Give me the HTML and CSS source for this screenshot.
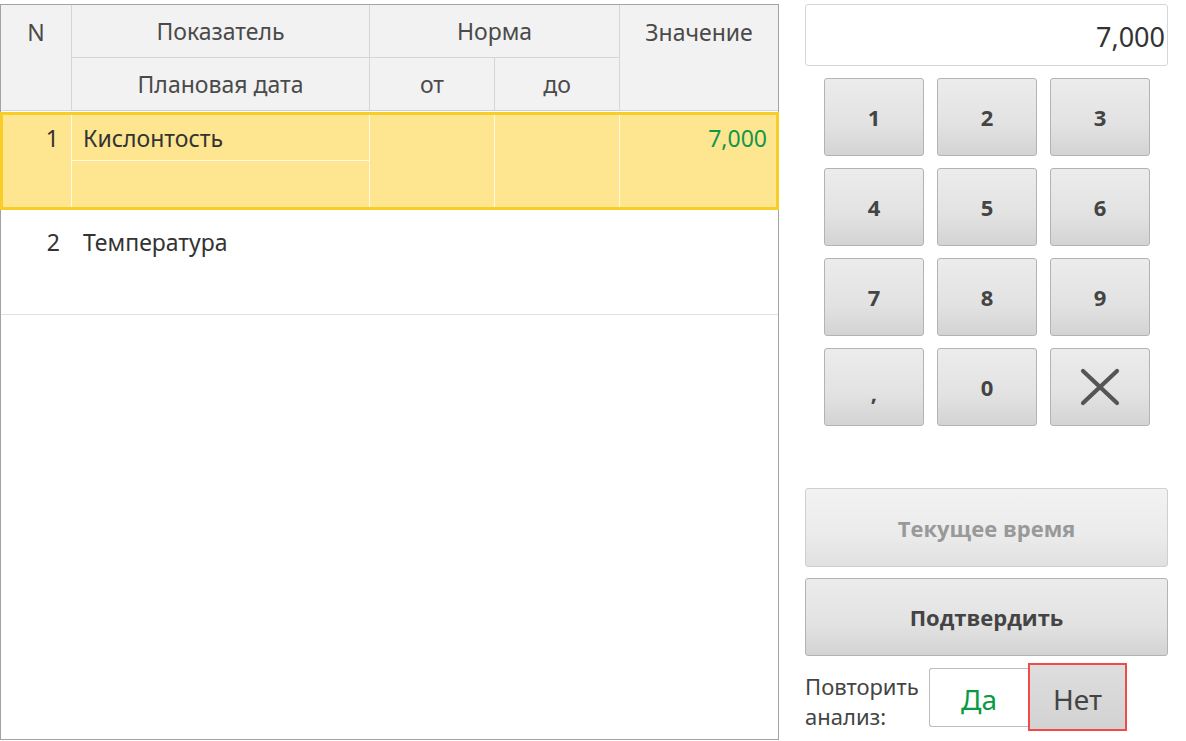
FILE: index.html
```html
<!DOCTYPE html>
<html lang="ru">
<head>
<meta charset="utf-8">
<title>Ввод показателей</title>
<link rel="stylesheet" href="styles.css">
</head>
<body>
<div class="page">
  <div class="grid-panel">
    <div class="thead">
      <div class="hc hc-n">N</div>
      <div class="hc hc-name">Показатель</div>
      <div class="hc hc-norm">Норма</div>
      <div class="hc hc-val">Значение</div>
      <div class="hc hc-date">Плановая дата</div>
      <div class="hc hc-from">от</div>
      <div class="hc hc-to">до</div>
    </div>
    <div class="row row-selected">
      <div class="c c-n">1</div>
      <div class="c c-name">
        <div class="sub sub-top">Кислонтость</div>
        <div class="sub sub-bottom"></div>
      </div>
      <div class="c c-from"></div>
      <div class="c c-to"></div>
      <div class="c c-val">7,000</div>
    </div>
    <div class="row row-plain">
      <div class="c c-n">2</div>
      <div class="c c-name">
        <div class="sub sub-top">Температура</div>
        <div class="sub sub-bottom"></div>
      </div>
      <div class="c c-from"></div>
      <div class="c c-to"></div>
      <div class="c c-val"></div>
    </div>
  </div>

  <div class="side">
    <div class="display">7,000</div>
    <div class="keypad">
      <button class="key">1</button>
      <button class="key">2</button>
      <button class="key">3</button>
      <button class="key">4</button>
      <button class="key">5</button>
      <button class="key">6</button>
      <button class="key">7</button>
      <button class="key">8</button>
      <button class="key">9</button>
      <button class="key key-comma">,</button>
      <button class="key">0</button>
      <button class="key key-clear" aria-label="Удалить">
        <svg width="40" height="38" viewBox="0 0 40 38"><path d="M3 3 L37 35 M37 3 L3 35" stroke="#555" stroke-width="4.2" stroke-linecap="round" fill="none"/></svg>
      </button>
    </div>
    <button class="wide-btn wide-disabled">Текущее время</button>
    <button class="wide-btn wide-main">Подтвердить</button>
    <div class="repeat">
      <div class="repeat-label">Повторить<br>анализ:</div>
      <div class="toggle">
        <div class="opt opt-yes">Да</div>
        <div class="opt opt-no">Нет</div>
      </div>
    </div>
  </div>
</div>
</body>
</html>
```

FILE: styles.css
```css
* { box-sizing: border-box; }

html, body {
  margin: 0;
  padding: 0;
  background: #ffffff;
}

body {
  font-family: "Noto Sans", "Open Sans", sans-serif;
  color: #333;
}

.page {
  display: flex;
  align-items: flex-start;
  padding-top: 4px;
  width: 1186px;
  height: 741px;
}

/* ---------- table ---------- */
.grid-panel {
  width: 779px;
  height: 736px;
  border: 1px solid #a3a3a3;
  background: #fff;
  flex-shrink: 0;
}

.thead {
  display: grid;
  grid-template-columns: 71px 298px 125px 125px 1fr;
  grid-template-rows: 53px 53px;
  background: #f2f2f2;
  color: #4a4a4a;
  font-size: 23px;
}

.hc {
  display: flex;
  align-items: center;
  justify-content: center;
  border-right: 1px solid #d6d6d6;
  border-bottom: 1px solid #d6d6d6;
  line-height: 1;
  padding-bottom: 0;
}

.hc-n { grid-row: 1 / span 2; grid-column: 1; align-items: flex-start; padding-top: 16px; }
.hc-name { grid-row: 1; grid-column: 2; }
.hc-norm { grid-row: 1; grid-column: 3 / span 2; }
.hc-val { grid-row: 1 / span 2; grid-column: 5; align-items: flex-start; padding-top: 16px; border-right: none; }
.hc-date { grid-row: 2; grid-column: 2; }
.hc-from { grid-row: 2; grid-column: 3; }
.hc-to { grid-row: 2; grid-column: 4; }

.thead .hc-date, .thead .hc-from, .thead .hc-to { border-bottom-color: #cfcfcf; }

.row {
  display: grid;
  font-size: 23px;
  color: #333;
}

.row-selected {
  margin: 1px -1px 0;
  height: 98px;
  grid-template-columns: 69px 298px 125px 125px 1fr;
  background: #fde68f;
  border: 3px solid #f9cd28;
}

.row-selected .c { border-right: 1px solid #fff8dc; }
.row-selected .c-val { border-right: none; }

.row-plain {
  height: 105px;
  grid-template-columns: 71px 298px 125px 125px 1fr;
  border-bottom: 1px solid #e0e0e0;
  padding-top: 9px;
}

.c {
  display: flex;
  flex-direction: column;
}

.c-n {
  align-items: flex-end;
  padding: 9px 12px 0 0;
  line-height: 28px;
}

.c-name { padding: 0; }

.sub {
  height: 46px;
  display: flex;
  align-items: center;
  padding-left: 11px;
}

.row-selected .sub-top { border-bottom: 1px solid #fff8dc; }
.row-selected .sub-bottom { flex: 1; }

.c-val {
  align-items: flex-end;
  padding: 9px 9px 0 0;
  line-height: 28px;
  color: #11974a;
}

/* ---------- side panel ---------- */
.side {
  margin-left: 26px;
  width: 363px;
  display: flex;
  flex-direction: column;
}

.display {
  height: 62px;
  border: 1px solid #d6d6d6;
  border-radius: 3px;
  font-size: 27px;
  color: #333;
  display: flex;
  align-items: center;
  justify-content: flex-end;
  padding: 3px 2px 0 0;
}

.keypad {
  display: grid;
  grid-template-columns: repeat(3, 100px);
  grid-auto-rows: 78px;
  column-gap: 13px;
  row-gap: 12px;
  margin: 12px 0 0 19px;
}

.key, .wide-btn {
  font-family: "Open Sans", "Noto Sans", sans-serif;
  font-weight: 700;
  color: #444;
  border: 1px solid #b3b3b3;
  border-radius: 3px;
  background: linear-gradient(to bottom, #ececec 0%, #e2e2e2 60%, #d3d3d3 100%);
  cursor: pointer;
  padding: 0;
}

.key {
  font-size: 22px;
  display: flex;
  align-items: center;
  justify-content: center;
}

.key-comma { padding-top: 10px; }

.key-clear svg { display: block; }

.wide-btn {
  width: 363px;
  height: 79px;
  font-size: 22px;
}

.wide-disabled {
  margin-top: 62px;
  color: #999;
  border-color: #cfcfcf;
  background: linear-gradient(to bottom, #f2f2f2 0%, #ebebeb 60%, #e0e0e0 100%);
}

.wide-main {
  margin-top: 11px;
  height: 78px;
}

.repeat {
  display: flex;
  align-items: flex-start;
  margin-top: 7px;
}

.repeat-label {
  font-size: 22px;
  line-height: 30px;
  color: #444;
  padding-top: 8px;
  width: 124px;
}

.toggle {
  display: flex;
  align-items: center;
  height: 68px;
}

.opt {
  width: 99px;
  display: flex;
  align-items: center;
  justify-content: center;
  font-size: 28px;
}

.opt-yes {
  height: 59px;
  border: 1px solid #bcbcbc;
  border-right: none;
  border-radius: 3px 0 0 3px;
  color: #0a9a44;
  background: #fff;
  padding-top: 4px;
}

.opt-no {
  height: 68px;
  border: 2px solid #f04a4a;
  color: #444;
  background: linear-gradient(to bottom, #dedede, #d2d2d2);
  padding-top: 4px;
}
```
